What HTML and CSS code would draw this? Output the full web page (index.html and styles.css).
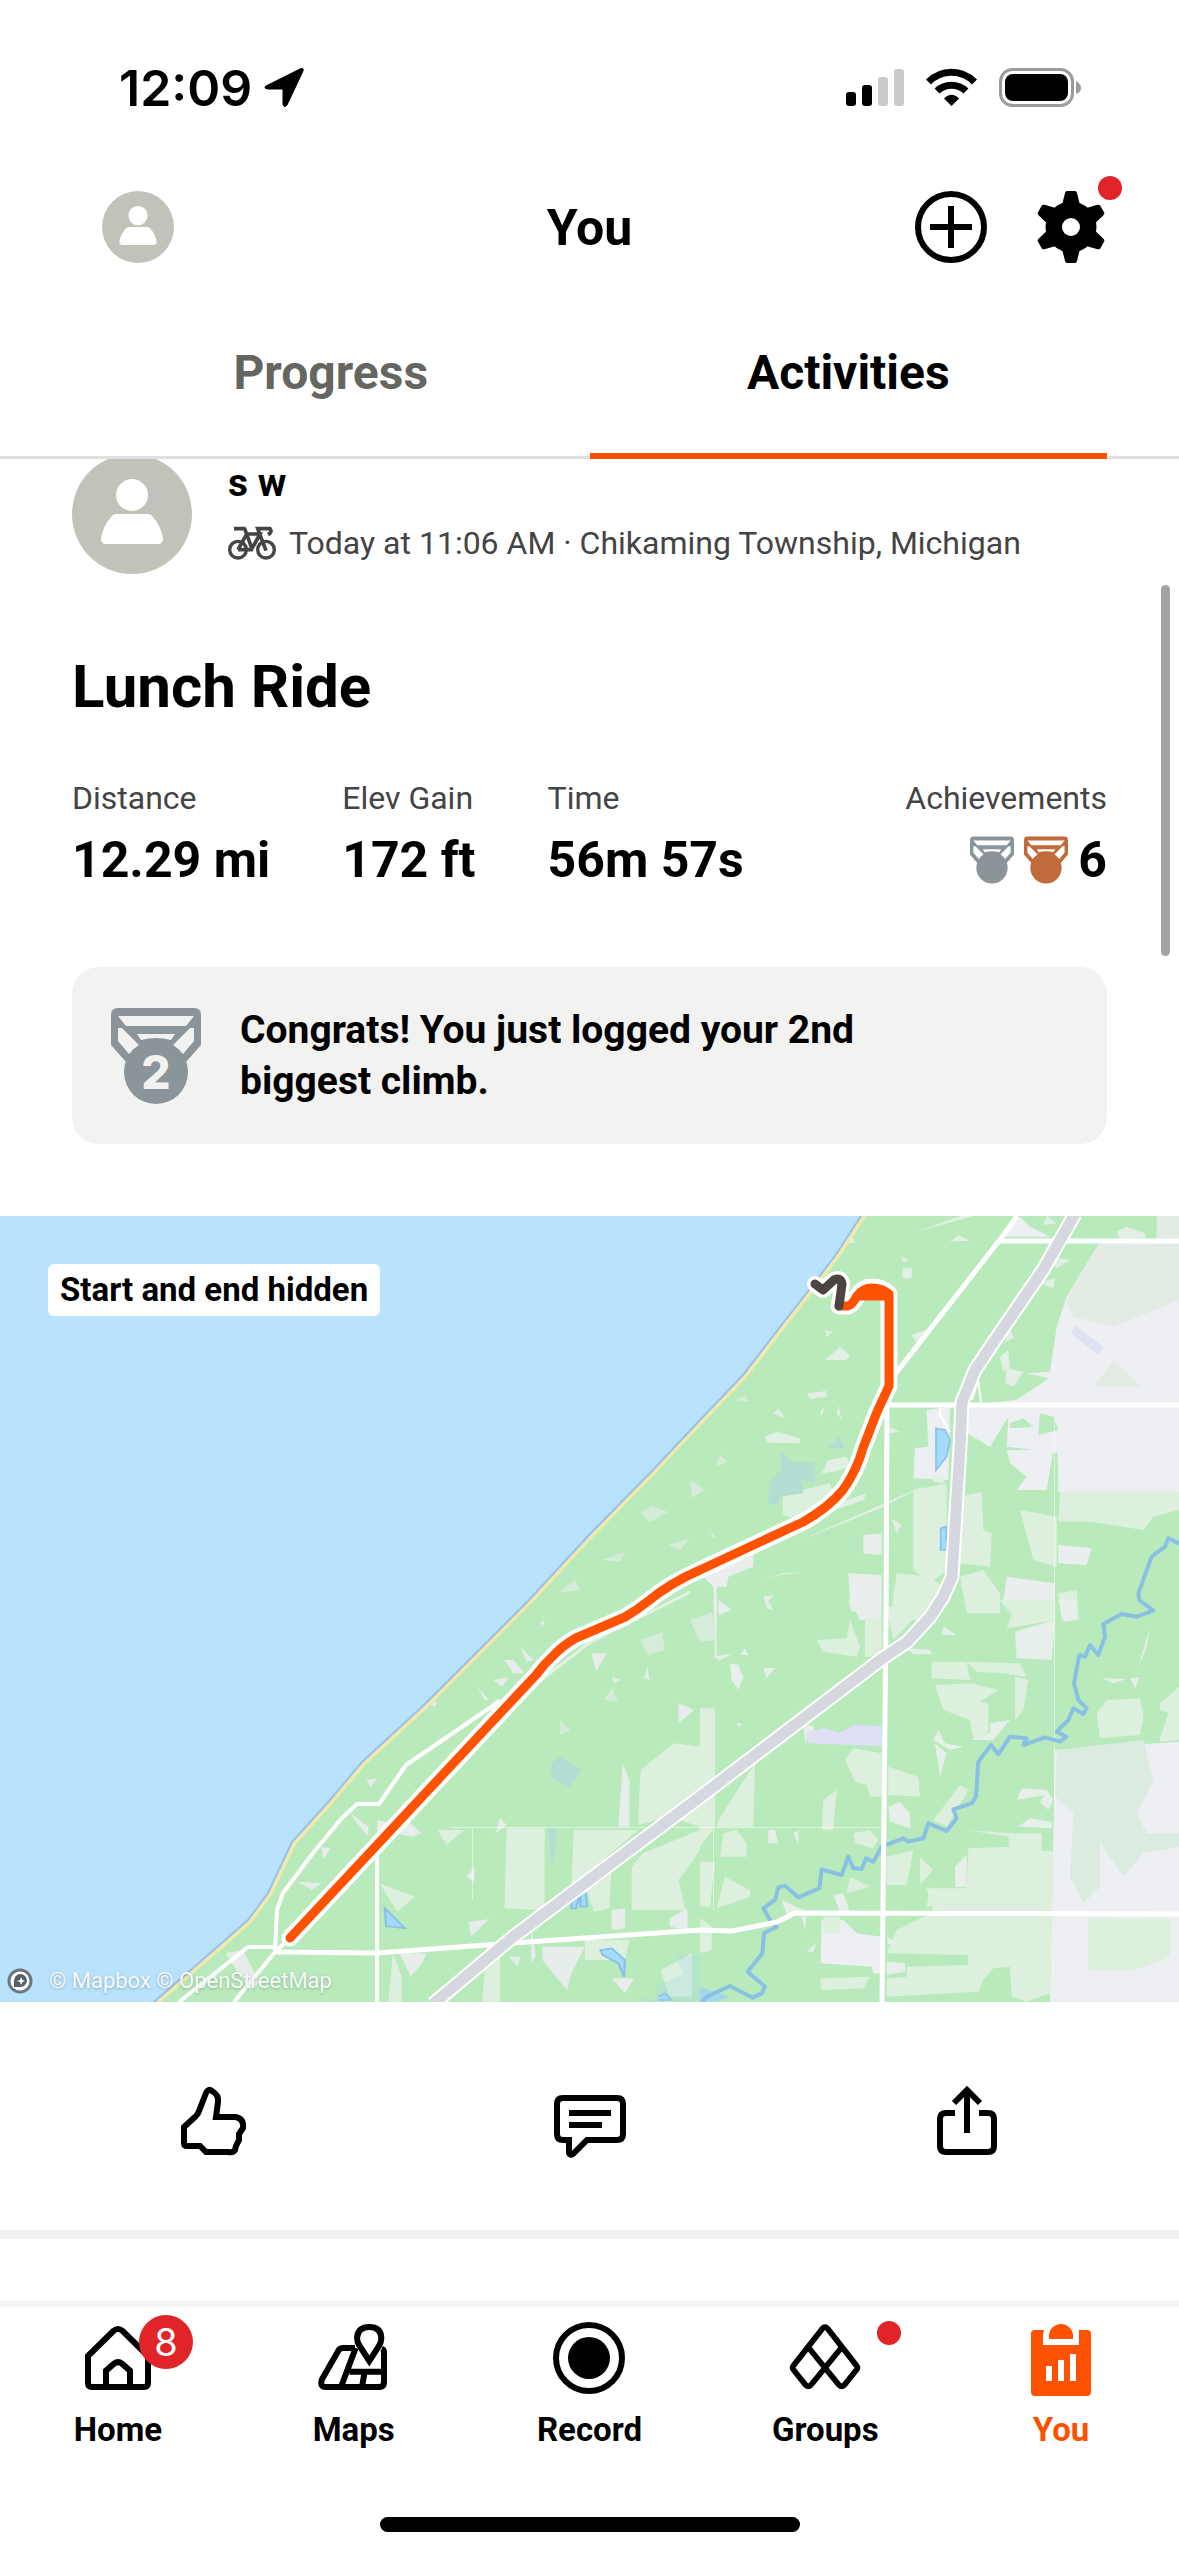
FILE: index.html
```html
<!DOCTYPE html>
<html lang="en">
<head>
<meta charset="utf-8">
<meta name="viewport" content="width=device-width, initial-scale=1">
<title>You</title>
<link rel="stylesheet" href="styles.css">
</head>
<body>
<svg class="defs" aria-hidden="true">
  <symbol id="person" viewBox="0 0 120 120">
    <circle cx="60" cy="60" r="60" fill="#c2c1ba"/>
    <circle cx="60" cy="41" r="16" fill="#fff"/>
    <path fill="#fff" d="M44 60H76Q79 60 81 63Q90 74 91 85Q91 90 86 90H34Q29 90 29 85Q30 74 39 63Q41 60 44 60Z"/>
  </symbol>
  <symbol id="medal" viewBox="0 0 90 96">
    <path fill="currentColor" fill-rule="evenodd" d="M7 0H83Q90 0 90 7V37L75 54H15L0 37V7Q0 0 7 0ZM7 8L15 18H75L83 8ZM7 20V33L18 46L28 37L11 20ZM83 20V33L72 46L62 37L79 20ZM26 26L30 32Q45 28 60 32L64 26Z"/>
    <circle cx="45" cy="64" r="32" fill="currentColor"/>
  </symbol>
</svg>
<div class="app">
  <header class="top">
    <div class="status">
      <div class="status-side">
        <span class="clock">12:09</span>
        <svg width="40" height="40" viewBox="0 0 40 40"><path d="M39 3L23 37Q20 41 19 36V21H4Q-1 20 2 18L36 1Q40-1 39 3Z" stroke="#000" stroke-linejoin="round"/></svg>
      </div>
      <div class="status-side status-right">
        <svg width="58" height="40" viewBox="0 0 58 40"><rect y="24" width="10" height="14" rx="3"/><rect x="16" y="17" width="10" height="21" rx="3"/><g fill="#cacaca"><rect x="32" y="9" width="10" height="29" rx="3"/><rect x="48" y="1" width="10" height="37" rx="3"/></g></svg>
        <svg width="51" height="40" viewBox="0 0 51 40"><g fill="none" stroke="#000" stroke-width="7"><path d="M2.500 14A32 32 0 0 1 48.500 14"/><path d="M11 23A21 21 0 0 1 40 23"/></g><path d="M25.500 38L18 30.500Q25.500 23 33 30.500Z"/></svg>
        <svg width="82" height="40" viewBox="0 0 82 40"><rect x="1.500" y="1.500" width="72" height="36" rx="12" fill="none" stroke="#9b9b9b" stroke-width="3"/><rect x="6" y="6" width="63" height="27" rx="8"/><path fill="#9b9b9b" d="M77 13Q82 16 82 20Q82 24 77 26Z"/></svg>
      </div>
    </div>
    <div class="titlebar">
      <button class="icon-btn" aria-label="Profile"><svg width="72" height="72"><use href="#person"/></svg></button>
      <h1>You</h1>
      <div class="titlebar-actions">
        <button class="icon-btn" aria-label="Add"><svg width="72" height="72" viewBox="0 0 72 72" fill="none" stroke="#000" stroke-width="6"><circle cx="36" cy="36" r="33"/><path d="M15 36H57M36 15V57"/></svg></button>
        <button class="icon-btn" aria-label="Settings">
          <svg width="72" height="72" viewBox="-36 -36 72 72">
            <defs><path id="tooth" d="M-9-22L-6-34Q-5.500-36-4-36H4Q5.500-36 6-34L9-22Z"/></defs>
            <circle r="25.500"/><use href="#tooth"/><use href="#tooth" transform="rotate(60)"/><use href="#tooth" transform="rotate(120)"/><use href="#tooth" transform="rotate(180)"/><use href="#tooth" transform="rotate(240)"/><use href="#tooth" transform="rotate(300)"/>
            <circle r="9" fill="#fff"/>
          </svg>
          <span class="dot dot-settings"></span>
        </button>
      </div>
    </div>
    <nav class="tabs" aria-label="Sections">
      <a class="tab" href="#progress">Progress</a>
      <a class="tab tab-active" href="#activities" aria-current="page">Activities</a>
    </nav>
  </header>

  <main class="feed">
    <span class="scrollbar"></span>
    <article>
      <div class="athlete">
        <svg class="athlete-photo" width="120" height="120"><use href="#person"/></svg>
        <div>
          <p class="athlete-name">s w</p>
          <p class="meta">
            <svg width="48" height="34" viewBox="24 60 144 102" fill="none" stroke="#444" stroke-width="10"><circle cx="54" cy="131" r="25"/><circle cx="138" cy="131" r="25"/><path d="M42 68H77M74 68L97 131M54 131L80 84H120L94 131H54M138 134L113 68H150Q158 78 144 86" stroke-width="11"/></svg>
            <span>Today at 11:06 AM · Chikaming Township, Michigan</span>
          </p>
        </div>
      </div>
      <h2>Lunch Ride</h2>
      <dl class="stats">
        <div><dt>Distance</dt><dd>12.29 mi</dd></div>
        <div><dt>Elev Gain</dt><dd>172 ft</dd></div>
        <div><dt>Time</dt><dd>56m 57s</dd></div>
        <div class="achievements"><dt>Achievements</dt><dd><svg class="silver" width="44" height="48"><use href="#medal"/></svg><svg class="bronze" width="44" height="48"><use href="#medal"/></svg><span>6</span></dd></div>
      </dl>
      <div class="notice">
        <svg class="silver" width="90" height="96" viewBox="0 0 90 96"><use href="#medal"/><text class="medal-rank" x="45" y="81" text-anchor="middle">2</text></svg>
        <p>Congrats! You just logged your 2nd biggest climb.</p>
      </div>
      <div class="map">
        <svg class="map-art" viewBox="0 1216 1179 786" role="img" aria-label="Route map">
          <rect y="1216" width="1179" height="786" fill="#b9eabb"/>
          <!-- open land, north east -->
          <g transform="translate(700 1200) scale(.333333)" fill="#e2efe4">
            <path fill="#eeeff3" d="M1200 125L1437 122V930L1075 875L1070 540L980 520L1050 515L1070 380L1100 290Z"/>
            <path fill="#e2ece5" d="M1370 48H1437V120H1370ZM1200 130L1437 132V300L1240 380L1120 350L1100 300ZM1240 480L1320 560L1280 600L1160 590Z"/>
            <path fill="#eeeff3" d="M950 600L1070 520L1120 560L1437 560V870H1080V760L920 740L925 650L870 740L800 700V615ZM920 750L1060 750L1040 870H950L980 830L930 790ZM680 630L750 620L745 840L640 835L645 745L685 740ZM910 110L960 50L990 80L1050 110Z"/>
            <path fill="#b9eabb" d="M1020 640L1060 650L1075 690L1015 705ZM930 670L970 655L1000 680L930 685Z"/>
            <path fill="#dcf0dd" d="M1080 875H1437V930L1360 950L1330 990L1175 965H1075ZM780 890L845 875L850 990L875 1000L870 1100L780 1090ZM640 870L740 850V1110L690 1150L640 1110ZM590 1120L690 1130L740 1170L700 1260H570ZM248 885L390 850L400 880L340 920L280 955L248 945ZM780 1130L850 1110L900 1180V1240H800ZM960 930L1070 950V1100L1000 1080ZM1075 1180L1130 1170L1137 1260H1085Z"/>
            <path fill="#eaeeef" d="M445 1120L545 1125V1260H480L450 1200ZM490 1005L545 1000V1065L490 1060ZM1075 1035L1175 1045L1160 1095L1075 1090ZM920 1130L1065 1150V1260H950L910 1200ZM0 1120L160 1065V1100L85 1130L80 1160H50V1260H45L40 1160Z"/>
            <path d="M375 480L420 440L450 465L440 480ZM195 710L230 695L300 715L300 730L200 728ZM365 820L385 780L440 770L450 800L400 815ZM320 580L380 573V590L330 597ZM645 97L780 48H820ZM440 130L455 100L465 128ZM602 170L625 178L612 190ZM608 205H635V235H608ZM750 125L775 105L810 122ZM635 405L690 385L650 430ZM1040 48L1070 70L1030 75ZM1050 170L1110 180L1070 205ZM1015 250L1065 235L1060 265ZM900 470L925 450L930 510L910 515ZM915 390L930 375L940 415L915 425ZM920 505L970 515L940 560L915 550ZM190 1190L220 1185L205 1205L220 1230L200 1225ZM195 1140L250 1118H300L240 1125ZM1250 95L1280 80L1335 100V115L1260 118ZM280 1030L700 845L540 925ZM400 915L500 880L490 900L350 950ZM565 680L600 695L570 700ZM700 830L730 820V850L700 845ZM575 955L605 975L590 1000ZM375 390L398 395L380 412ZM235 625L255 655L220 640ZM375 620L365 650L360 635ZM415 615L425 660L410 640ZM30 995L50 1015L38 1010Z"/>
            <path fill="#dfe0f2" d="M1125 378L1210 440L1195 465L1112 400Z"/>
            <path fill="#b3dcd2" d="M205 910L208 850L245 805L240 750L275 785L345 785L345 850L305 840L310 880L240 890L235 915ZM385 745L415 710L435 745Z"/>
            <g fill="#a4dafa" stroke="#8bc0ea" stroke-width="5"><path d="M708 685L735 690L750 720L740 770L708 810Z"/><path d="M738 980L722 985V1050H740Z"/></g>
          </g>
          <!-- open land, south east -->
          <g transform="translate(700 1600) scale(.333333)" fill="#dcf0dd">
            <path fill="#eeeff3" d="M1065 450L1437 425V1205H1050ZM365 960H430L470 1000L545 1010V1120H520L515 1100L362 1090Z"/>
            <path fill="#dcebdf" d="M1070 450L1330 420L1360 540L1310 640L1340 700H1437V740L1330 760L1270 830L1200 730V860L1150 910L1110 830L1120 640L1065 590Z"/>
            <path d="M1165 955H1410V1070L1305 1110H1165ZM805 745L930 740L1060 755L1050 1180L980 1205L935 1190L930 1100L880 1105L850 1140L835 1175L560 1190V1135L620 1130V1100L805 1095V1065L560 1060L590 990L700 935L680 865H800ZM695 185H800L810 240L695 235ZM800 185L960 190L980 230L910 220L830 215ZM705 255L815 250L895 270L840 305L865 310V400L820 420L810 360L730 330ZM1190 340L1220 300L1320 295L1330 350L1320 405L1200 415ZM1380 310L1437 260V420L1380 425ZM350 120L440 115L450 60L480 140L470 170L370 155ZM495 55L545 50V170H495ZM435 480L460 445L545 460V590H510L500 555L465 545ZM565 500L655 530L660 590L565 585ZM0 325H45V680L0 740ZM55 660L165 490L160 680H50ZM370 600L410 570L400 690L365 690ZM70 700L110 690L140 730V770H60ZM0 785H45L30 920H0ZM75 830L150 870V890L50 925ZM700 660L780 555L805 570L740 680ZM800 690L930 700L1025 700V750H930L925 710ZM560 770L640 750L620 855H560ZM660 770L700 810L660 855ZM460 700L510 690L535 720L520 745L465 730ZM360 1135L510 1130L490 1165L365 1170ZM0 955L35 980V1050L0 1060ZM370 950H420V1000H370ZM560 20H665V30L580 120ZM900 0H1065V60L920 85L935 45ZM945 230L985 240L970 330L945 360ZM450 830L510 860L440 880ZM690 860L715 915L680 920Z"/>
            <path fill="#e6efe9" d="M945 95L1065 60L1055 180L950 175ZM1075 0H1130V60L1090 65ZM445 0H520L515 30L455 35ZM90 190L115 195L130 230L115 270L95 240ZM565 620L600 605L630 640V685L570 665ZM730 80L770 105L725 105ZM620 145L690 150L697 163L640 162ZM1205 235L1280 237L1240 250ZM1290 235L1320 230L1305 265ZM705 430L740 460L720 530ZM700 420L715 390L735 430L790 440L750 450ZM870 370L930 360L880 420H810L870 400ZM950 600L965 565L1040 570L1060 600L1045 630L1020 605L1035 585ZM955 680L990 655L1055 665V685ZM1350 80L1340 140L1315 200ZM245 900L320 935L260 945ZM55 0L95 30L55 45ZM205 690H225L235 730H205ZM280 700L295 690V735ZM765 800L800 765V860H765ZM305 950H320L315 990ZM320 1055L348 1030L340 1055ZM400 885L430 880L450 935H420ZM560 1010L585 1025L565 1035ZM40 0H50V170H45ZM120 165L135 145L145 165ZM40 170L100 160L60 180ZM190 205L225 203L200 235ZM560 1085L615 1090V1115L560 1125ZM310 375L340 378L345 400L315 425ZM75 370L72 312ZM108 370H125L117 382Z"/>
            <path fill="#b9eabb" d="M1380 330L1405 340L1380 415Z"/>
            <path fill="#dfe0f5" d="M320 395L370 385L420 398L460 375L545 378V438L325 430Z"/>
            <path fill="#a4d7ea" d="M0 1160L40 1175L90 1190L50 1205H0Z"/>
          </g>
          <!-- open land, south west -->
          <g transform="translate(0 1600) scale(.446429 .333333)" fill="#dcf0dd">
            <path d="M1430 640L1435 510L1510 430L1568 440V680L1500 650L1430 675ZM1135 685H1220V930L1130 925ZM1285 690L1430 690L1280 860ZM1440 760L1568 690V750L1520 840L1535 930H1415V800ZM1310 850L1370 800L1365 925L1330 935ZM980 690L1040 690L1000 735ZM850 850L930 890L890 935ZM1090 1040L1120 1030V1205H1080ZM1310 1020H1410L1400 1080H1310ZM880 1060L900 1130V1205H870ZM1480 1110L1550 1060V1190H1500Z"/>
            <path fill="#e6edea" d="M1385 680L1395 490L1410 540V680ZM1110 700L1120 655L1135 675ZM880 700L910 660L945 700L925 710ZM1215 1040H1310L1280 1120L1270 1170L1215 1080ZM895 1060L955 1060L945 1090L920 1130ZM505 1060L545 1050L580 1150L560 1170ZM1325 160H1360L1335 215ZM1130 180L1150 180L1175 220H1150ZM1165 140L1195 180L1180 185ZM1105 240L1140 230L1125 260ZM1070 260L1095 300H1085ZM1370 930L1400 925V985L1370 990ZM1500 955L1540 925V990L1500 980ZM1045 830L1063 800V845ZM1520 310L1555 330L1520 370ZM720 740L740 745L725 780ZM665 845L720 850L700 870ZM820 540L845 535L830 560ZM955 310L980 305L975 320ZM785 640L825 680V710L800 670ZM845 660L880 670V700H845ZM1370 1135H1420L1400 1180ZM1450 200L1455 240L1443 235ZM1370 230L1390 240L1375 250ZM1190 980L1200 1070L1190 1090ZM1140 1070H1165L1160 1100ZM1210 65L1220 60L1215 85ZM1050 965L1095 958L1055 1010Z"/>
            <path fill="#b3dcd2" d="M1235 490L1255 470L1305 510L1275 560L1235 535ZM1228 685H1248L1240 790H1235Z"/>
            <g fill="#a4dafa" stroke="#8bc0ea" stroke-width="5"><path d="M862 925L907 985L865 978ZM1280 890V925H1290L1300 880V920H1315L1312 880M1345 1050L1370 1045L1400 1080L1398 1130L1385 1090L1350 1065ZM1475 1190L1490 1180L1503 1200H1475"/></g>
            <path fill="#a4d7ea" d="M1440 1190L1470 1200V1160L1530 1120L1510 1060L1568 1070V1205H1440Z" opacity=".3"/>
          </g>
          <!-- clearings along the shore -->
          <path fill="#d5ecd9" d="M735 1400L745 1396L750 1402ZM640 1512L652 1506L668 1512L650 1522ZM602 1560L625 1552L620 1562ZM560 1592L575 1580L580 1590ZM690 1480L705 1490L692 1498ZM720 1455L728 1462L716 1466ZM668 1545L690 1538L680 1550ZM640 1640L662 1632L665 1650L648 1655ZM690 1620L712 1612L716 1640L700 1642ZM604 1700L612 1688L618 1702ZM560 1720L570 1730L560 1735Z"/>
          <path fill="#fff" opacity=".5" d="M450 1827H885V1828H450ZM472 1828H473V1900H472ZM713 1830H714V1910H713ZM1054 1420H1055V1800H1054Z"/>
          <!-- lake and beach -->
          <path fill="#b9e3fc" stroke="#f3e9a9" stroke-width="9" d="M-20 1190H878L861 1216L837 1253L813 1285L780 1327L743 1375L700 1420L652 1471L590 1534L529 1600L489 1640L424 1705L362 1762L330 1800L292 1842L268 1893L248 1920L154 2002L130 2030H-20Z"/>
          <path fill="#b9e3fc" stroke="#98bff0" stroke-width="2" d="M-20 1190H878L861 1216L837 1253L813 1285L780 1327L743 1375L700 1420L652 1471L590 1534L529 1600L489 1640L424 1705L362 1762L330 1800L292 1842L268 1893L248 1920L154 2002L130 2030H-20Z"/>
          <path fill="none" stroke="#8ac0e4" stroke-width="12" stroke-linejoin="round" transform="translate(700 1600) scale(.333333)" d="M1450-165L1437-170L1405-185L1395-160L1355-130L1315-20L1318 0L1360 32L1310 50L1265 42L1210 72L1215 110L1195 165L1170 135L1155 170L1138 165L1122 250L1135 300L1160 325L1150 342L1120 325L1105 360L1070 395L1100 410L1080 425L1035 412L970 435L980 415L930 410L895 463L873 435L835 485L828 590L815 610L760 628L770 655L740 693L685 670L670 715L625 725L610 715L545 740L520 785L498 775L485 807L460 805L445 770L425 825L365 808L358 865L295 892L255 857L235 862L225 900L190 925L210 960L230 980L192 1000L187 1060L143 1115L195 1160L185 1180L158 1193L90 1158L20 1190L0 1215L-60 1225"/>
          <!-- roads -->
          <g fill="none" stroke="#fff" stroke-linejoin="round">
            <path stroke-width="5" d="M1017 1216L1002 1237L889 1382L887 1405L886 1620L882 2002M1000 1241H1179M887 1405H1179M275 1952L377 1953L513 1943L700 1930L732 1931L777 1922L795 1913L1179 1914"/>
            <path stroke-width="4" d="M500 1700L491 1707L406 1765L379 1804H357L342 1818L313 1853L283 1893L277 1910L275 1952L234 2002M290 1938L275 1952M275 1947H248L179 2002M377 1850V2002"/>
            <path stroke="#e4f1e6" stroke-width="3" d="M690 1592L589 1643L536 1684"/>
            <path stroke-width="2" d="M940 1405V1415L950 1432M978 1380L972 1400M978 1380L981 1402"/>
            <path stroke-width="15" d="M1075 1214L1043 1270L997 1337L975 1370L962 1402L960 1447L952 1577L943 1597L930 1617L907 1642L883 1658L700 1797L513 1937L433 2004"/>
            <path stroke="#d6d8df" stroke-width="11" d="M1075 1214L1043 1270L997 1337L975 1370L962 1402L960 1447L952 1577L943 1597L930 1617L907 1642L883 1658L700 1797L513 1937L433 2004"/>
          </g>
          <!-- recorded route -->
          <g fill="none" stroke-linecap="round" stroke-linejoin="round">
            <path stroke="#fff" stroke-width="17" d="M839 1306H848Q852 1305 857 1296Q863 1287 872 1287Q882 1287 889 1294V1386L877 1412L863 1448Q857 1470 843 1490Q828 1508 803 1522L760 1542L700 1570Q670 1583 647 1602Q637 1610 625 1617L576 1638Q562 1646 554 1655Q544 1664 536 1675L491 1723L290 1938"/>
            <path stroke="#fff" stroke-width="16" d="M815 1284L823 1290L834 1280Q841 1277 842 1284L839 1306"/>
            <path stroke="#ff5200" stroke-width="9" d="M839 1306H848Q852 1305 857 1296Q863 1288 872 1288Q882 1288 889 1294V1386L877 1412L863 1448Q857 1470 843 1490Q828 1508 803 1522L760 1542L700 1570Q670 1583 647 1602Q637 1610 625 1617L576 1638Q562 1646 554 1655Q544 1664 536 1675L491 1723L290 1938M859 1296H888"/>
            <path stroke="#4a4541" stroke-width="9" d="M815 1284L823 1290L834 1280Q841 1277 842 1284L839 1306"/>
          </g>
        </svg>
        <span class="map-label">Start and end hidden</span>
        <div class="map-credit">
          <svg width="26" height="26" viewBox="0 0 26 26"><circle cx="13" cy="13" r="11" fill="#fff" stroke="#6b7680" stroke-width="3"/><path fill="#56606a" d="M7 19V13A6.500 6.500 0 1 1 13 19Z"/><path fill="#fff" d="M14 9L15.500 12L18 13L15.500 14L14 17L13 14L10 13L13 12Z"/></svg>
          <span>© Mapbox © OpenStreetMap</span>
        </div>
      </div>
      <div class="actions">
        <button class="icon-btn" aria-label="Give kudos"><svg width="72" height="72" viewBox="0 0 72 72" fill="none" stroke="#000" stroke-width="6"><path d="M7 41L19 30Q21 28 22 25L29 7Q31 2 35 5Q42 9 41 16L39 31H58Q67 32 66 42L62 48V54L59 60L58 64Q56 67 51 66H29L23 60H10Q7 60 7 57Z"/></svg></button>
        <button class="icon-btn" aria-label="Comment"><svg width="72" height="72" viewBox="0 0 72 72" fill="none" stroke="#000" stroke-width="6"><path d="M9 12H63Q69 12 69 18V48Q69 54 63 54H33L19 68Q16 70 15 67V54H9Q3 54 3 48V18Q3 12 9 12ZM15 27H57M15 39H48"/></svg></button>
        <button class="icon-btn" aria-label="Share"><svg width="72" height="72" viewBox="0 0 72 72" fill="none" stroke="#000" stroke-width="6"><path d="M24 27H15Q9 27 9 33V60Q9 66 15 66H57Q63 66 63 60V33Q63 27 57 27H48M36 47V4M23 17L36 4L49 17"/></svg></button>
      </div>
    </article>
  </main>

  <footer class="bottom">
    <nav class="bottom-nav" aria-label="Main">
      <a href="#home"><span class="nav-icon"><svg width="72" height="72" viewBox="66 66 216 216" fill="none" stroke="#000" stroke-width="18"><path d="M84 168L160 93Q174 81 188 93L264 168V249Q264 261 252 261H96Q84 261 84 249ZM138 261V212L162 191Q174 182 186 191L210 212V261"/></svg><span class="badge">8</span></span><span>Home</span></a>
      <a href="#maps"><span class="nav-icon"><svg width="72" height="72" viewBox="771 66 216 216" fill="none" stroke="#000" stroke-width="18"><path d="M882 144H846Q837 144 832 152L783 238Q775 261 795 261H955Q969 261 969 247V155Q969 149 962 146M884 144L840 261M866 215H969M911 215L903 261"/><path fill="#fff" d="M925 183L896 138Q888 126 888 113Q891 81 925 81Q959 81 961 113Q961 126 954 138Z"/></svg></span><span>Maps</span></a>
      <a href="#record"><span class="nav-icon"><svg width="72" height="72" viewBox="0 0 72 72"><circle cx="36" cy="36" r="33" fill="none" stroke="#000" stroke-width="6"/><circle cx="36" cy="36" r="21"/></svg></span><span>Record</span></a>
      <a href="#groups"><span class="nav-icon"><svg width="72" height="72" viewBox="84 66 216 216" fill="none" stroke="#000" stroke-width="17"><path d="M150 255Q142 263 134 255L98 210Q92 203 98 196L184 86Q192 77 200 86L286 196Q292 203 286 210L250 255Q242 263 234 255L143 143M241 143L150 255"/></svg><span class="dot dot-groups"></span></span><span>Groups</span></a>
      <a class="current" href="#you" aria-current="page"><span class="nav-icon"><svg width="72" height="72" viewBox="792 66 216 216" fill="#ff5200"><path fill-rule="evenodd" d="M822 90H849Q846 100 846 110V135H954V110Q954 100 954 90H978Q990 90 990 102V276Q990 288 978 288H822Q810 288 810 276V102Q810 90 822 90ZM855 198V243H873V198ZM891 180V243H909V180ZM927 162V243H945V162Z"/><path d="M864 117V108A36 36 0 0 1 936 108V117Z"/></svg></span><span>You</span></a>
    </nav>
    <div class="home-indicator"></div>
  </footer>
</div>
</body>
</html>
```
FILE: styles.css
```css
* { box-sizing: border-box; }
body {
  margin: 0;
  background: #fff;
  color: #000;
  font-family: Roboto, "Noto Sans", sans-serif;
}
h1, h2, p, dl, dd { margin: 0; }
svg { display: block; flex: none; overflow: visible; }
a { color: inherit; text-decoration: none; }
.defs { position: absolute; width: 0; height: 0; }
.app { display: flex; flex-direction: column; min-height: 100vh; }

.top { border-bottom: 3px solid #dfdfe0; }
.status {
  display: flex;
  justify-content: space-between;
  align-items: center;
  padding: 58px 98px 0 119px;
  height: 118px;
}
.status-side { display: flex; align-items: center; gap: 12px; }
.status-right { gap: 22px; }
.clock { font: 600 50px/60px Inter, sans-serif; }
.titlebar {
  display: grid;
  grid-template-columns: 1fr auto 1fr;
  align-items: center;
  padding: 73px 72px 72px;
}
.titlebar h1 { padding-top: 2px; font-size: 50px; line-height: 70px; font-weight: 700; }
.titlebar > .icon-btn { margin-left: 30px; }
.titlebar-actions { display: flex; justify-content: flex-end; gap: 48px; }
.icon-btn {
  position: relative;
  justify-self: start;
  padding: 0;
  border: 0;
  background: none;
  cursor: pointer;
}
.dot {
  position: absolute;
  width: 24px;
  height: 24px;
  border-radius: 50%;
  background: #e02428;
}
.dot-settings { top: -15px; right: -15px; }
.dot-groups { top: -1px; right: -40px; }
.tabs { display: flex; padding: 0 72px; margin-bottom: -3px; }
.tab {
  flex: 1;
  height: 124px;
  padding-top: 8px;
  border-bottom: 6px solid transparent;
  color: #666661;
  font-size: 48px;
  line-height: 60px;
  font-weight: 700;
  text-align: center;
}
.tab-active { color: #000; border-color: #fc5200; }

.feed { position: relative; flex: 1; overflow: hidden; }
.scrollbar {
  position: absolute;
  top: 126px;
  right: 9px;
  width: 9px;
  height: 371px;
  border-radius: 5px;
  background: #a3a3a3;
}
.athlete { display: flex; gap: 36px; padding: 0 72px; margin-top: -5px; }
.athlete-name { padding-top: 7px; font-size: 39px; line-height: 44px; font-weight: 700; }
.meta {
  display: flex;
  align-items: center;
  gap: 13px;
  padding-top: 16px;
  color: #444;
  font-size: 32px;
  line-height: 44px;
}
.feed h2 { padding: 75px 72px 0; font-size: 60px; line-height: 76px; font-weight: 700; }
.stats { display: flex; gap: 72px; padding: 51px 72px 0; }
.stats dt { color: #444; font-size: 32px; line-height: 44px; }
.stats dd { padding-top: 10px; font-size: 50px; line-height: 60px; font-weight: 700; white-space: nowrap; }
.achievements { margin-left: auto; text-align: right; }
.achievements dd { display: flex; justify-content: flex-end; align-items: center; gap: 10px; }
.silver { color: #8b9599; }
.bronze { color: #c26b3a; }
.notice {
  display: flex;
  align-items: center;
  gap: 39px;
  margin: 77px 72px 72px;
  padding: 38px 39px 37px;
  border-radius: 27px;
  background: #f2f2f0;
}
.notice p { max-width: 680px; font-size: 39px; line-height: 51px; font-weight: 700; }
.medal-rank { fill: #f2f2f0; font: 800 46px Inter, sans-serif; }
.map { position: relative; overflow: hidden; }
.map-art { width: 100%; height: auto; overflow: hidden; }
.map-label {
  position: absolute;
  top: 48px;
  left: 48px;
  padding: 4px 12px;
  border-radius: 6px;
  background: #fff;
  font-size: 33px;
  line-height: 44px;
  font-weight: 700;
}
.map-credit {
  position: absolute;
  bottom: 6px;
  left: 7px;
  display: flex;
  align-items: center;
  gap: 16px;
  color: #f4faf9;
  font-size: 22px;
  line-height: 30px;
  text-shadow: 0 1px 3px rgba(0, 0, 0, .25);
}
.actions {
  display: grid;
  grid-template-columns: repeat(3, 1fr);
  justify-items: center;
  padding: 84px 24px 72px;
  border-bottom: 9px solid #f1f1ef;
}
.actions .icon-btn { justify-self: center; }

.bottom { border-top: 7px solid #f6f6f6; }
.bottom-nav { display: grid; grid-template-columns: repeat(5, 1fr); padding-top: 15px; }
.bottom-nav a {
  display: flex;
  flex-direction: column;
  align-items: center;
  gap: 14px;
  font-size: 33px;
  line-height: 44px;
  font-weight: 700;
}
.nav-icon { position: relative; }
.bottom-nav .current { color: #fc5200; }
.badge {
  position: absolute;
  top: -7px;
  right: -39px;
  width: 54px;
  height: 54px;
  border-radius: 50%;
  background: #e02428;
  color: #fff;
  font: 400 38px/54px Inter, sans-serif;
  text-align: center;
}
.home-indicator {
  width: 420px;
  max-width: 50%;
  height: 15px;
  margin: 65px auto 24px;
  border-radius: 8px;
  background: #000;
}
```
